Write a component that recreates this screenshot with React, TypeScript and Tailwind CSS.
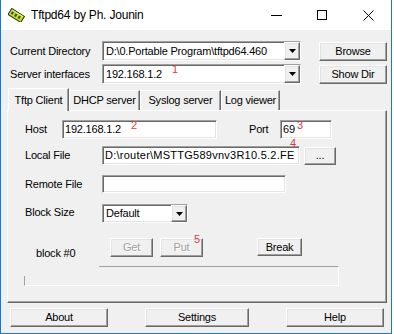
import React from 'react';

const sunken =
  'bg-white border border-t-[#a0a0a0] border-l-[#a0a0a0] border-b-white border-r-white shadow-[inset_1px_1px_0_#696969,inset_-1px_-1px_0_#e3e3e3]';
const raised =
  'bg-[#f0f0f0] border border-t-white border-l-white border-r-[#696969] border-b-[#696969] shadow-[inset_-1px_-1px_0_#a0a0a0,inset_1px_1px_0_#e3e3e3]';

function Arrow() {
  return (
    <svg width="7" height="4" viewBox="0 0 7 4">
      <polygon points="0,0 7,0 3.5,4" fill="#000" />
    </svg>
  );
}

function Combo({ value, className }: { value: string; className: string }) {
  return (
    <div className={`${sunken} flex items-center ${className}`}>
      <span className="flex-1 pl-[3px] whitespace-nowrap overflow-hidden">{value}</span>
      <div className={`${raised} w-[16px] h-full flex items-center justify-center`}>
        <Arrow />
      </div>
    </div>
  );
}

function Button({
  label,
  className,
  disabled,
}: {
  label: string;
  className: string;
  disabled?: boolean;
}) {
  return (
    <div
      className={`${raised} flex items-center justify-center ${className} ${
        disabled ? 'text-[#a0a0a0] [text-shadow:1px_1px_0_#fff]' : 'text-black'
      }`}
    >
      {label}
    </div>
  );
}

function Tab({ label, active, className }: { label: string; active?: boolean; className: string }) {
  return (
    <div
      className={`flex items-center justify-center border-l border-t border-l-white border-t-white border-r border-r-[#696969] shadow-[inset_-1px_0_0_#a0a0a0] bg-[#f0f0f0] ${
        active ? 'h-[23px] -mb-[1px] z-10 relative' : 'h-[20px]'
      } ${className}`}
    >
      {label}
    </div>
  );
}

function AppIcon() {
  return (
    <svg width="17" height="14" viewBox="0 0 17 14">
      <g transform="rotate(32 8.5 7)">
        <rect x="1" y="4" width="15" height="7" fill="#c9dc2a" stroke="#203010" strokeWidth="1" />
        <rect x="3" y="6" width="2" height="3" fill="#2f4a12" />
        <rect x="7" y="6" width="2" height="3" fill="#2f4a12" />
        <rect x="11" y="6" width="2" height="3" fill="#2f4a12" />
        <rect x="2" y="4.5" width="13" height="1" fill="#f2f26a" />
      </g>
    </svg>
  );
}

function Mark({ n, className }: { n: string; className: string }) {
  return (
    <span className={`absolute text-[11px] leading-none text-[#e0393e] ${className}`}>{n}</span>
  );
}

export default function App() {
  return (
    <div className="relative w-[394px] h-[334px] bg-white font-['Liberation_Sans',Arial,sans-serif] text-[11px] text-black tracking-[-0.2px]">
      <div className="w-[392px] h-[334px] flex flex-col border-x border-b border-[#1e78c8]">
        {/* Title bar */}
        <div className="h-[30px] bg-white flex items-center">
          <div className="ml-[7px]">
            <AppIcon />
          </div>
          <span className="ml-[6px] text-[12px]">Tftpd64 by Ph. Jounin</span>
          <div className="ml-auto flex">
            <div className="w-[46px] h-[30px] flex items-center justify-center">
              <div className="w-[11px] h-px bg-black" />
            </div>
            <div className="w-[46px] h-[30px] flex items-center justify-center">
              <div className="w-[10px] h-[10px] border border-black" />
            </div>
            <div className="w-[46px] h-[30px] flex items-center justify-center">
              <svg width="11" height="11" viewBox="0 0 11 11">
                <path d="M0.5 0.5 L10.5 10.5 M10.5 0.5 L0.5 10.5" stroke="#000" strokeWidth="1" />
              </svg>
            </div>
          </div>
        </div>

        {/* Body */}
        <div className="flex-1 bg-[#f0f0f0] flex flex-col">
          <div className="ml-[9px] mt-[11px] flex items-center h-[20px]">
            <span className="w-[92px]">Current Directory</span>
            <Combo value="D:\0.Portable Program\tftpd64.460" className="w-[199px] h-[20px]" />
            <Button label="Browse" className="ml-[18px] w-[68px] h-[19px]" />
          </div>
          <div className="ml-[9px] mt-[3px] flex items-center h-[20px]">
            <span className="w-[92px]">Server interfaces</span>
            <Combo value="192.168.1.2" className="w-[199px] h-[20px]" />
            <Button label="Show Dir" className="ml-[18px] w-[68px] h-[19px]" />
          </div>

          {/* Tabs */}
          <div className="ml-[7px] mt-[4px] h-[22px] flex items-end">
            <Tab label="Tftp Client" active className="w-[61px]" />
            <Tab label="DHCP server" className="w-[71px]" />
            <Tab label="Syslog server" className="w-[81px]" />
            <Tab label="Log viewer" className="w-[59px]" />
          </div>

          {/* Panel */}
          <div className="ml-[6px] w-[380px] h-[193px] flex flex-col border border-t-white border-l-white border-r-[#696969] border-b-[#696969] shadow-[inset_-1px_-1px_0_#a0a0a0]">
            <div className="mt-[9px] ml-[17px] flex items-center h-[19px]">
              <span className="w-[37px]">Host</span>
              <div className={`${sunken} w-[155px] h-[19px] flex items-center pl-[2px]`}>192.168.1.2</div>
              <span className="ml-[32px] w-[31px]">Port</span>
              <div className={`${sunken} w-[52px] h-[19px] flex items-center pl-[2px]`}>69</div>
            </div>
            <div className="mt-[7px] ml-[17px] flex items-center h-[19px]">
              <span className="w-[77px]">Local File</span>
              <div
                className={`${sunken} w-[198px] h-[19px] flex items-center pl-[2px] overflow-hidden whitespace-nowrap tracking-[0.25px]`}
              >
                D:\router\MSTTG589vnv3R10.5.2.FE
              </div>
              <Button label="..." className="ml-[4px] w-[32px] h-[18px]" />
            </div>
            <div className="mt-[10px] ml-[17px] flex items-center h-[18px]">
              <span className="w-[77px]">Remote File</span>
              <div className={`${sunken} w-[184px] h-[18px]`} />
            </div>
            <div className="mt-[11px] ml-[17px] flex items-start h-[19px]">
              <span className="w-[77px]">Block Size</span>
              <Combo value="Default" className="w-[86px] h-[19px]" />
            </div>
            <div className="mt-[15px] ml-[28px] flex items-start h-[19px]">
              <span className="w-[74px] mt-[7px]">block #0</span>
              <Button label="Get" disabled className="w-[43px] h-[19px]" />
              <Button label="Put" disabled className="ml-[7px] w-[43px] h-[19px]" />
              <Button label="Break" className="ml-[54px] w-[45px] h-[18px]" />
            </div>
            <div className="mt-[9px] ml-[16px] w-[315px] h-[20px] flex flex-col">
              <div className="ml-[75px] h-[10px] border-t border-r border-t-[#a0a0a0] border-r-white" />
              <div className="h-[10px] border-l border-b border-r border-l-[#a0a0a0] border-b-white border-r-white" />
            </div>
          </div>

          {/* Bottom buttons */}
          <div className="mt-[5px] ml-[9px] flex items-center">
            <Button label="About" className="w-[98px] h-[19px]" />
            <Button label="Settings" className="ml-[37px] w-[104px] h-[19px]" />
            <Button label="Help" className="ml-[37px] w-[98px] h-[19px]" />
          </div>
        </div>
      </div>

      <Mark n="1" className="left-[172px] top-[64px]" />
      <Mark n="2" className="left-[131px] top-[120px]" />
      <Mark n="3" className="left-[297px] top-[120px]" />
      <Mark n="4" className="left-[290px] top-[138px]" />
      <Mark n="5" className="left-[194px] top-[234px]" />
    </div>
  );
}
